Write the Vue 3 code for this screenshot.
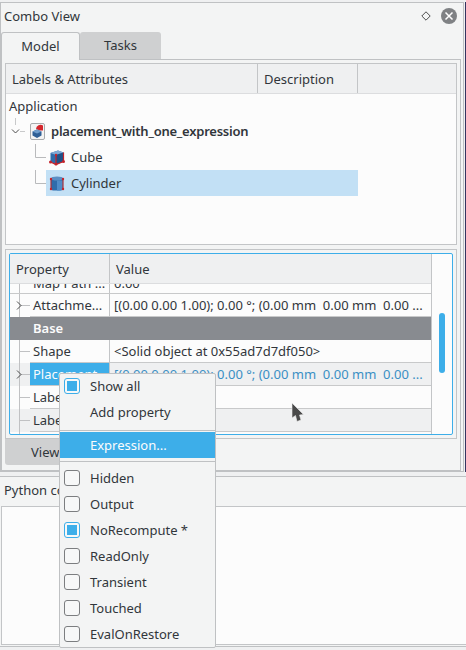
<script setup>
const props = [
  { name: 'Attachme...', value: '[(0.00 0.00 1.00); 0.00 °; (0.00 mm  0.00 mm  0.00 ...', arrow: true },
  { name: 'Base', group: true },
  { name: 'Shape', value: '<Solid object at 0x55ad7d7df050>' },
  { name: 'Placement', value: '[(0.00 0.00 1.00); 0.00 °; (0.00 mm  0.00 mm  0.00 ...', arrow: true, selected: true, alt: true },
  { name: 'Label', value: '' },
  { name: 'Label2', value: '', alt: true },
]

const menuTop = [
  { label: 'Show all', check: true, on: true },
  { label: 'Add property' },
]
const menuBottom = [
  { label: 'Hidden' },
  { label: 'Output' },
  { label: 'NoRecompute *', on: true },
  { label: 'ReadOnly' },
  { label: 'Transient' },
  { label: 'Touched' },
  { label: 'EvalOnRestore' },
]
</script>

<template>
  <div class="page">
    <div class="top">
      <div class="dock">
        <div class="dock-title">
          <span>Combo View</span>
          <svg class="float-ico" width="10" height="10" viewBox="0 0 10 10"><path d="M5 .8 9.200 5 5 9.200 .8 5Z" fill="none" stroke="#4d4d4d" stroke-width="1"/></svg>
          <svg class="close-ico" width="16" height="16" viewBox="0 0 16 16"><circle cx="8" cy="8" r="8" fill="#7f8184"/><path d="M4.500 4.500 11.500 11.500M11.500 4.500 4.500 11.500" stroke="#fff" stroke-width="1.500"/></svg>
        </div>
        <div class="tabs">
          <div class="tab active">Model</div>
          <div class="tab">Tasks</div>
        </div>
        <div class="pane">
          <div class="tree">
            <div class="tree-head">
              <div class="th labels">Labels &amp; Attributes</div>
              <div class="th desc">Description</div>
              <div class="th"></div>
            </div>
            <div class="tree-row app">Application</div>
            <div class="tree-row root">
              <svg class="branch" width="24" height="26" viewBox="0 0 24 26">
                <path d="M9.500 0V7M14 13.500H19" stroke="#c8c9ca" stroke-width="1" fill="none"/>
                <path d="M6 11.500 9.500 15 13 11.500" stroke="#4d4d4d" stroke-width="1" fill="none"/>
              </svg>
              <svg class="doc-ico" width="15" height="17" viewBox="0 0 15 17">
                <rect x=".5" y=".5" width="14" height="16" rx="1.500" fill="#f4f4f4" stroke="#a9abad"/>
                <path d="M6 6a4.500 4.500 0 0 1 7-3.500V7.500h-3Z" fill="#d4262c"/>
                <path d="M7 6.500 11.500 8.500V12.500L7 15 2.500 12.500V8.500Z" fill="#2f5f96"/>
                <path d="M7 6.500 11.500 8.500 7 10.500 2.500 8.500Z" fill="#6f9ccb"/>
              </svg>
              <b>placement_with_one_expression</b>
            </div>
            <div class="tree-row child">
              <svg class="branch2" width="46" height="26" viewBox="0 0 46 26">
                <path d="M35.500 0V13.500H46" stroke="#b9babc" fill="none"/>
              </svg>
              <span class="cell">
                <svg class="obj-ico" width="16" height="17" viewBox="0 0 16 17">
                  <path d="M1.500 4 9 1.500 14.500 3.500V12.500L7 15.500 1.500 13Z" fill="#2f6cab"/>
                  <path d="M1.500 4 9 1.500 14.500 3.500 7 6Z" fill="#7ea9d6"/>
                  <path d="M7 6V15.500L14.500 12.500V3.500Z" fill="#1f5288"/>
                  <path d="M1.500 13 7 15.500 14.500 12.500M7 6V15.500M14.500 3.500V12.500" stroke="#c4232b" stroke-width="1.200" fill="none"/>
                  <circle cx="1.500" cy="13" r="1.500" fill="#c4232b"/><circle cx="7" cy="15" r="1.500" fill="#c4232b"/><circle cx="14.500" cy="12.500" r="1.500" fill="#c4232b"/><circle cx="7" cy="6" r="1.200" fill="#c4232b"/>
                </svg>
                Cube
              </span>
            </div>
            <div class="tree-row child">
              <svg class="branch2" width="46" height="26" viewBox="0 0 46 26">
                <path d="M35.500 0V13.500H46" stroke="#b9babc" fill="none"/>
              </svg>
              <span class="cell sel">
                <svg class="obj-ico" width="16" height="17" viewBox="0 0 16 17">
                  <rect x="2" y="2.500" width="12" height="13" rx="2" fill="#2f6cab"/>
                  <ellipse cx="8" cy="3.500" rx="6" ry="2" fill="#5d8fc4"/>
                  <path d="M8 5.500H14V13.500Q14 15.500 8 15.500Z" fill="#4f8cc8"/>
                  <path d="M2 4V14M14 4V14" stroke="#a8323c" stroke-width="1.200"/>
                  <circle cx="2" cy="4" r="1.200" fill="#c4232b"/><circle cx="14" cy="4" r="1.200" fill="#c4232b"/><circle cx="2" cy="14" r="1.200" fill="#c4232b"/><circle cx="14" cy="14" r="1.200" fill="#c4232b"/>
                </svg>
                Cylinder
              </span>
            </div>
          </div>
          <div class="prop-frame">
            <div class="prop-table">
              <div class="prop-main">
                <div class="prop-head">
                  <div class="ph name">Property</div>
                  <div class="ph">Value</div>
                </div>
                <div class="prop-cut">
                  <svg class="cut-gutter" width="20" height="10" viewBox="0 0 20 10"><path d="M9.500 0V10" stroke="#c0c1c3"/></svg>
                  <div class="cut-name"><span>Map Path ...</span></div>
                  <div class="cut-value"><span>0.00</span></div>
                </div>
                <div v-for="p in props" :key="p.name" class="prow" :class="{ group: p.group, alt: p.alt }">
                  <template v-if="p.group">
                    <span class="group-name">{{ p.name }}</span>
                  </template>
                  <template v-else>
                    <div class="gutter">
                      <svg width="20" height="23" viewBox="0 0 20 23">
                        <path d="M9.500 0V23M10 11.500H20" stroke="#c0c1c3" fill="none"/>
                        <path v-if="p.arrow" d="M7 7.500 11 11.500 7 15.500" stroke="#4d4d4d" fill="none"/>
                      </svg>
                    </div>
                    <div class="pname" :class="{ picked: p.selected }">{{ p.name }}</div>
                    <div class="pvalue" :class="{ linked: p.selected }">{{ p.value }}</div>
                  </template>
                </div>
                <div class="prop-tail"><i></i></div>
              </div>
              <div class="scroll"><div class="thumb"></div></div>
            </div>
          </div>
          <div class="view-tabs"><div class="view-tab">View</div></div>
        </div>
      </div>
    </div>

    <div class="console">
      <div class="console-title">Python console</div>
      <div class="console-box"></div>
    </div>

    <svg class="cursor" width="14" height="22" viewBox="0 0 14 22">
      <path d="M1 1V16L4.500 13.500 6 19.500 10 18 8.500 13 12.500 12.500Z" fill="#4a4a4a" stroke="#eee" stroke-width=".6"/>
    </svg>

    <div class="menu">
      <div v-for="m in menuTop" :key="m.label" class="mitem">
        <span class="box" v-if="m.check" :class="{ on: m.on }"></span>
        <span class="mlabel">{{ m.label }}</span>
      </div>
      <div class="msep"></div>
      <div class="mitem hot"><span class="mlabel">Expression...</span></div>
      <div class="msep low"></div>
      <div v-for="m in menuBottom" :key="m.label" class="mitem">
        <span class="box" :class="{ on: m.on }"></span>
        <span class="mlabel">{{ m.label }}</span>
      </div>
    </div>
  </div>
</template>

<style>
html, body { margin: 0; background: #eff0f1; }
</style>

<style scoped>
.page {
  position: relative;
  width: 466px;
  height: 650px;
  overflow: hidden;
  background: #eff0f1;
  font-family: "Noto Sans", sans-serif;
  font-size: 13px;
  color: #31363b;
  box-sizing: border-box;
  padding-top: 2px;
}
.top {
  width: 466px;
  height: 470px;
  box-sizing: border-box;
  border-right: 1px solid #34345f;
}
.dock {
  width: 464px;
  height: 470px;
  box-sizing: border-box;
  border: 1px solid #bfc1c3;
  background: #f3f4f4;
}
.dock-title {
  height: 29px;
  display: flex;
  align-items: center;
  padding: 0 5px 4px 3px;
  box-sizing: border-box;
}
.dock-title span { flex: 1; }
.float-ico { margin-right: 10px; }
.close-ico { margin-right: 1px; }
.tabs { display: flex; height: 27px; }
.tab {
  width: 81px;
  height: 27px;
  background: #cfd0d1;
  text-align: center;
  line-height: 27px;
  border-radius: 3px 3px 0 0;
  box-sizing: border-box;
}
.tab.active {
  width: 79px;
  background: #f3f4f4;
  border: 1px solid #bfc1c3;
  border-bottom: 0;
  height: 28px;
  position: relative;
  z-index: 1;
}
.pane {
  width: 460px;
  height: 412px;
  box-sizing: border-box;
  border: 1px solid #bfc1c3;
  padding: 3px 3px 0 3px;
  background: #f3f4f4;
}
.tree {
  height: 182px;
  width: 452px;
  box-sizing: border-box;
  border: 1px solid #c3c5c7;
  background: #fcfcfc;
}
.tree-head { display: flex; height: 29px; background: #eff0f1; border-bottom: 1px solid #dcdddf; }
.th { line-height: 30px; padding-left: 6px; box-sizing: border-box; flex: 1; }
.labels { flex: none; width: 252px; border-right: 1px solid #c3c5c7; }
.desc { flex: none; width: 100px; border-right: 1px solid #c3c5c7; }
.tree-row { display: flex; align-items: center; height: 26px; }
.app { padding-left: 3px; height: 24px; }
.branch { flex: none; }
.doc-ico { margin-right: 6px; }
.root b { font-weight: 600; letter-spacing: -0.24px; }
.branch2 { flex: none; margin-left: -6px; }
.child { padding-left: 6px; margin-left: -6px; }
.cell { display: flex; align-items: center; width: 312px; height: 26px; flex: none; }
.cell.sel { background: #c2e0f5; }
.obj-ico { margin: 0 6px 0 3px; }

.prop-frame {
  width: 452px;
  height: 190px;
  margin-top: 4px;
  box-sizing: border-box;
  border: 1px solid #c3c5c7;
  padding: 3px;
}
.prop-table {
  display: flex;
  height: 182px;
  box-sizing: border-box;
  border: 1px solid #3daee9;
  border-radius: 2px;
  background: #fcfcfc;
  overflow: hidden;
}
.prop-main { width: 422px; border-right: 1px solid #c3c5c7; flex: none; box-sizing: border-box; }
.prop-head { display: flex; height: 30px; background: #eff0f1; border-bottom: 1px solid #dcdddf; box-sizing: border-box; }
.ph { padding-left: 6px; line-height: 30px; }
.ph.name { width: 93px; border-right: 1px solid #c3c5c7; }
.prop-cut { height: 9px; display: flex; overflow: hidden; border-bottom: 1px solid #c8c9ca; }
.cut-gutter { flex: none; }
.cut-name { width: 76px; padding-left: 3px; flex: none; border-right: 1px solid #c3c5c7; position: relative; overflow: hidden; white-space: nowrap; }
.cut-value { padding-left: 4px; position: relative; }
.cut-name span, .cut-value span { position: absolute; bottom: 1px; line-height: 18px; }
.prow { display: flex; height: 23px; align-items: stretch; }
.prow.alt { background: #eff0f1; }
.prow.group {
  background: #888b90;
  color: #fcfcfc;
  font-weight: 600;
  align-items: center;
  padding-left: 23px;
  padding-bottom: 2px;
  box-sizing: border-box;
}
.gutter { width: 20px; height: 23px; flex: none; }
.gutter svg { display: block; }
.pname {
  width: 76px;
  flex: none;
  padding-left: 3px;
  line-height: 22px;
  border-right: 1px solid #c3c5c7;
  border-bottom: 1px solid #c8c9ca;
  height: 22px;
  white-space: nowrap;
  overflow: hidden;
}
.pname.picked { background: #3daee9; color: #fcfcfc; }
.pvalue {
  flex: 1;
  padding-left: 4px;
  line-height: 22px;
  height: 22px;
  border-bottom: 1px solid #c8c9ca;
  white-space: pre;
  overflow: hidden;
}
.pvalue.linked { color: #3a8fc4; }
.prop-tail { height: 5px; padding-left: 9px; }
.prop-tail i { display: block; width: 1px; height: 5px; background: #c0c1c3; }
.scroll { flex: 1; position: relative; }
.thumb {
  position: absolute;
  left: 7px;
  top: 59px;
  width: 6px;
  height: 60px;
  background: #3daee9;
  border-radius: 3px;
}
.view-tab {
  width: 100px;
  height: 26px;
  background: #cfd0d1;
  border-radius: 0 0 3px 3px;
  padding-left: 26px;
  line-height: 26px;
  box-sizing: border-box;
}
.console { margin-top: 4px; border-top: 1px solid #bfc1c3; background: #f3f4f4; border-bottom: 1px solid #bfc1c3; }
.console-title { height: 29px; line-height: 27px; padding-left: 4px; }
.console-box {
  height: 139px;
  margin-left: 1px;
  background: #fcfcfc;
  border: 1px solid #c3c5c7;
  border-right: 0;
  box-sizing: border-box;
  margin-bottom: 1px;
}
.cursor { position: absolute; left: 291px; top: 402px; }
.menu {
  position: absolute;
  left: 59px;
  top: 373px;
  width: 157px;
  height: 275px;
  box-sizing: border-box;
  background: #f3f4f4;
  border: 1px solid #bfc1c3;
  border-radius: 2px;
}
.mitem { position: relative; height: 26px; display: flex; align-items: center; }
.mitem:first-child { margin-top: -1px; }
.mlabel { margin-left: 30px; }
.box + .mlabel { margin-left: 0; }
.box {
  width: 14px;
  height: 14px;
  margin: 0 10px 0 4px;
  border: 1px solid #7c7e80;
  border-radius: 3px;
  background: #f7f8f8;
  flex: none;
  position: relative;
}
.box.on { border-color: #3daee9; }
.box.on::after {
  content: "";
  position: absolute;
  inset: 2px;
  background: #3daee9;
}
.msep { height: 1px; background: #bfc1c3; margin: 5px 0 1px 0; }
.msep.low { margin: 3px 0 3px 0; }
.mitem.hot { background: #3daee9; color: #fcfcfc; }
</style>
